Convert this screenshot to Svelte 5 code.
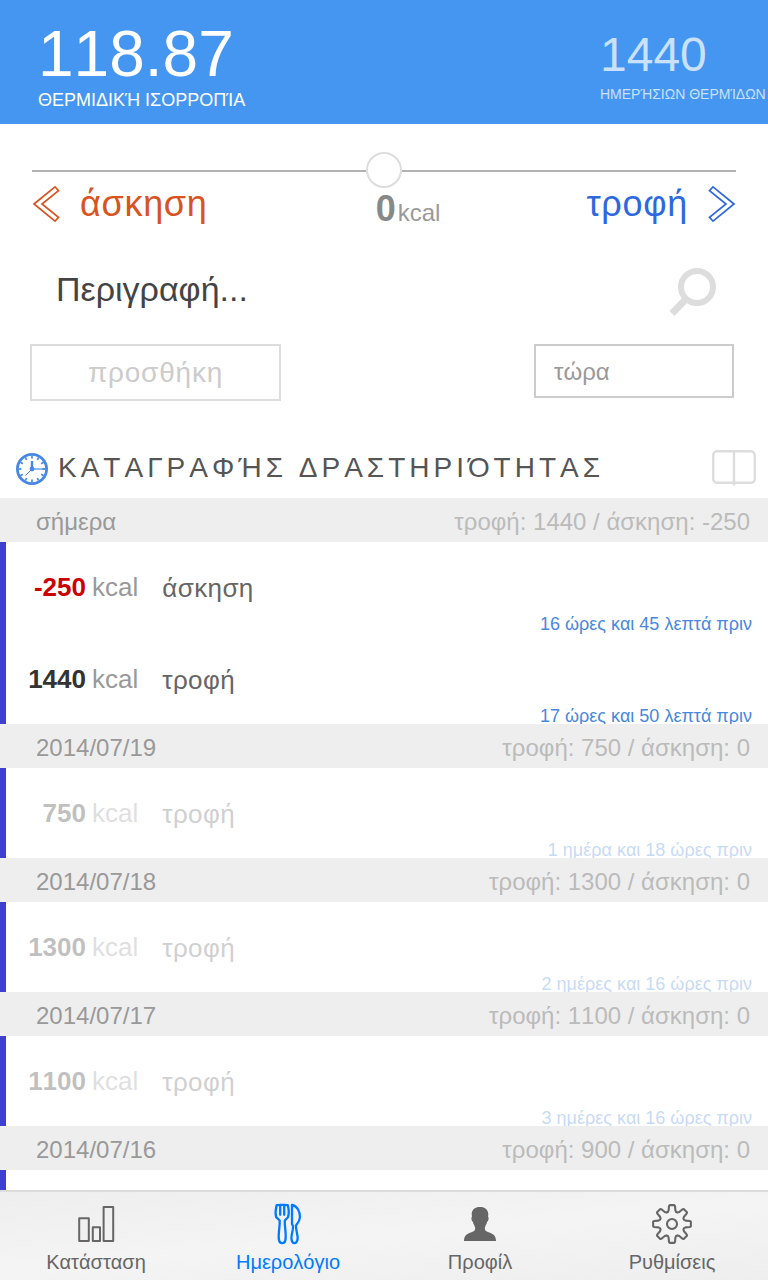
<script>
  const days = [
    { label: 'σήμερα', food: 1440, exercise: -250, faded: false, entries: [
      { amount: -250, name: 'άσκηση', ago: '16 ώρες και 45 λεπτά πριν' },
      { amount: 1440, name: 'τροφή', ago: '17 ώρες και 50 λεπτά πριν' }
    ] },
    { label: '2014/07/19', food: 750, exercise: 0, faded: true, entries: [
      { amount: 750, name: 'τροφή', ago: '1 ημέρα και 18 ώρες πριν' }
    ] },
    { label: '2014/07/18', food: 1300, exercise: 0, faded: true, entries: [
      { amount: 1300, name: 'τροφή', ago: '2 ημέρες και 16 ώρες πριν' }
    ] },
    { label: '2014/07/17', food: 1100, exercise: 0, faded: true, entries: [
      { amount: 1100, name: 'τροφή', ago: '3 ημέρες και 16 ώρες πριν' }
    ] },
    { label: '2014/07/16', food: 900, exercise: 0, faded: true, entries: [] }
  ];
  const ticks = Array.from({ length: 12 }, (_, i) => i * 30);

  // Outline of an eight-toothed cog around the origin.
  function cog() {
    const pts = [];
    for (let i = 0; i < 8; i++) {
      for (const [r, off] of [[14, -14], [18.2, -9.5], [19, -7], [19, 7], [18.2, 9.5], [14, 14], [12.7, 19], [12.7, 26]]) {
        const a = ((i * 45 + off - 90) * Math.PI) / 180;
        pts.push(`${(r * Math.cos(a)).toFixed(2)},${(r * Math.sin(a)).toFixed(2)}`);
      }
    }
    return pts.join(' ');
  }
</script>

<div class="app">
  <header>
    <div class="balance"><div class="big">118.87</div><div class="cap">ΘΕΡΜΙΔΙΚΉ ΙΣΟΡΡΟΠΊΑ</div></div>
    <div class="daily"><div class="big">1440</div><div class="cap">ΗΜΕΡΉΣΙΩΝ ΘΕΡΜΊΔΩΝ</div></div>
  </header>

  <section class="entry">
    <div class="slider"><span class="line"></span><span class="knob"></span><span class="line"></span></div>
    <div class="modes">
      <div class="mode exercise">
        <svg width="28" height="38" viewBox="0 0 28 38"><path d="M2 19 23 1.8 26.5 5.7 10 19 26.5 32.3 23 36.2Z" /></svg>
        <span>άσκηση</span>
      </div>
      <div class="value"><b>0</b><span>kcal</span></div>
      <div class="mode food">
        <span>τροφή</span>
        <svg width="28" height="38" viewBox="0 0 28 38"><path d="M26 19 5 1.8 1.5 5.7 18 19 1.5 32.3 5 36.2Z" /></svg>
      </div>
    </div>
    <div class="describe">
      <span>Περιγραφή...</span>
      <svg width="48" height="50" viewBox="0 0 48 50" fill="none" stroke="#ddd"><circle cx="28" cy="20" r="16" stroke-width="6" /><path d="M18 31 3 46.5" stroke-width="7" /></svg>
    </div>
    <div class="controls"><div class="add">προσθήκη</div><div class="when">τώρα</div></div>
  </section>

  <div class="title">
    <svg class="clock" width="32" height="32" viewBox="-16 -16 32 32" fill="none" stroke="#4788e6">
      <circle r="14.6" stroke-width="2.8" />
      {#each ticks as t}<path d="M0-13.4V-10.6" stroke-width="1.7" transform="rotate({t})" />{/each}
      <path d="M0 0V-8" stroke-width="2.4" /><path d="M0 0H13" stroke-width="1.2" /><path d="M0 0-6.5 6.5" stroke-width="1" />
      <circle r="2.4" fill="#4788e6" stroke="none" />
    </svg>
    <h2>ΚΑΤΑΓΡΑΦΉΣ ΔΡΑΣΤΗΡΙΌΤΗΤΑΣ</h2>
    <svg class="book" width="44" height="36" viewBox="0 0 44 36" fill="none" stroke="#ddd" stroke-width="2.4"><rect x="1.2" y="1.2" width="41.6" height="31.6" rx="4" /><path d="M22 1V35.5" /></svg>
  </div>

  <main>
    {#each days as day}
      <div class="day"><span>{day.label}</span><span class="sum">τροφή: {day.food} / άσκηση: {day.exercise}</span></div>
      <div class="entries" class:faded={day.faded} class:rest={!day.entries.length}>
        {#each day.entries as e}
          <div class="row">
            <div class="what"><b class:neg={e.amount < 0}>{e.amount}</b><span class="unit">kcal</span><span class="name">{e.name}</span></div>
            <div class="ago">{e.ago}</div>
          </div>
        {/each}
      </div>
    {/each}
  </main>

  <nav>
    <div class="tab">
      <svg width="44" height="44" viewBox="0 0 44 44" fill="none" stroke="#666" stroke-width="2" stroke-linejoin="round"><rect x="5.2" y="16.2" width="9.6" height="22.8" /><rect x="18.8" y="25.2" width="7.2" height="13.8" /><rect x="29.6" y="5" width="9.6" height="34" /></svg>
      <span>Κατάσταση</span>
    </div>
    <div class="tab active">
      <svg width="44" height="44" viewBox="0 0 44 44" fill="none" stroke="#007aff" stroke-width="2.3" stroke-linejoin="round" stroke-linecap="round">
        <path d="M10.6 3.2Q16 2.4 21.8 3.2C23 8 23 12 22 15.2L18.8 18.5C18.5 24 20.2 31 19.6 37Q19 41.2 16.2 41.2T12.8 37C12.2 31 14 24 13.7 18.5L10.2 15.2C9.4 12 9.6 7 10.6 3.2Z" />
        <path d="M14.2 3V12.8M18.2 3V12.8" />
        <path d="M26 3C31.5 4 34 10 34 15C33.8 19 32 21 30 23.5C29.5 27 31.8 32 31.7 36.5Q31 41 28.5 41.2T25.4 36.5C25.4 31 27.5 28 27 24L26 22Z" />
      </svg>
      <span>Ημερολόγιο</span>
    </div>
    <div class="tab">
      <svg width="44" height="44" viewBox="0 0 44 44" fill="#666"><path d="M22 5C27 5 30.3 7.5 30.3 12.5L30 14.5C31.2 16 30.6 18.8 29.1 20C28.5 22.5 27 24.2 26.8 26C26.6 28.5 28 29.5 30.5 30.2C35 31.5 38 33.5 38 39H6C6 33.5 9 31.5 13.5 30.2C16 29.5 17.4 28.5 17.2 26C17 24.2 15.5 22.5 14.9 20C13.4 18.8 12.8 16 14 14.5L13.7 12C14 7.2 17 5 22 5Z" /></svg>
      <span>Προφίλ</span>
    </div>
    <div class="tab">
      <svg width="44" height="44" viewBox="-22 -22 44 44" fill="none" stroke="#666" stroke-width="2.1" stroke-linejoin="round"><polygon points={cog()} /><circle r="5" /></svg>
      <span>Ρυθμίσεις</span>
    </div>
  </nav>
</div>

<style>
  :global(body) { margin: 0; background: #fff; overflow: hidden; }
  .app { width: 768px; height: 1280px; display: flex; flex-direction: column; overflow: hidden; font-family: 'Liberation Sans', Arial, sans-serif; font-kerning: none; white-space: nowrap; box-sizing: border-box; }
  .app * { box-sizing: border-box; }
  svg { display: block; flex: none; }
  header { height: 124px; flex: none; background: #4596f1; color: #fff; display: flex; justify-content: space-between; padding-left: 38px; }
  .balance { padding-top: 17px; }
  .balance .big { font-size: 64px; line-height: 74px; }
  .balance .cap { font-size: 18px; line-height: 18px; }
  .daily { width: 168px; padding-top: 27px; color: #c9e1fb; }
  .daily .big { font-size: 48px; line-height: 56px; }
  .daily .cap { font-size: 14px; line-height: 22px; }
  .entry { height: 312px; flex: none; padding: 28px 32px 0; }
  .slider { display: flex; align-items: center; height: 36px; }
  .line { flex: 1; height: 2px; background: #b2b2b2; margin-top: 2px; }
  .knob { width: 36px; height: 36px; border: 2px solid #ddd; border-radius: 50%; }
  .modes { display: grid; grid-template-columns: 1fr auto 1fr; height: 48px; }
  .mode { display: flex; font-size: 36px; line-height: 31px; letter-spacing: 0.7px; }
  .mode svg { margin-top: -3px; fill: none; stroke: currentColor; stroke-width: 1.7; }
  .exercise { color: #d9531e; gap: 20px; }
  .food { color: #2e68de; justify-content: flex-end; gap: 20px; }
  .value { display: flex; align-items: baseline; line-height: 42px; color: #999; font-size: 24px; gap: 2px; margin-left: 48px; }
  .value b { color: #888; font-size: 36px; }
  .describe { display: flex; justify-content: space-between; height: 112px; padding: 32px 19px 0 24px; margin-top: -1px; color: #444; font-size: 34px; line-height: 44px; }
  .controls { display: flex; justify-content: space-between; align-items: flex-start; margin: -3px -2px 0; }
  .add { width: 251px; height: 57px; border: 2px solid #ddd; color: #ccc; text-align: center; font-size: 28px; line-height: 53px; letter-spacing: 0.8px; }
  .when { width: 200px; height: 54px; border: 2px solid #ccc; color: #999; font-size: 24px; line-height: 52px; padding-left: 18px; margin-right: 4px; }
  .title { height: 62px; flex: none; display: flex; align-items: flex-start; padding: 14px 12px 0 16px; }
  .clock { margin-top: 3px; }
  h2 { flex: 1; margin: 1px 0 0 10px; font-size: 28px; font-weight: 400; line-height: 34px; letter-spacing: 4px; color: #555; }
  main { flex: 1; min-height: 0; overflow: hidden; }
  .day { position: relative; height: 44px; background: #eee; color: #999; font-size: 24px; line-height: 48px; padding: 0 18px 0 36px; display: flex; justify-content: space-between; }
  .sum { color: #bbb; }
  .entries { border-left: 6px solid #4040cf; display: flex; flex-direction: column; gap: 2px; }
  .rest { height: 20px; }
  .row { height: 90px; padding: 29px 16px 0 12px; }
  .what { display: flex; font-size: 26px; line-height: 32px; color: #999; }
  .what b { width: 68px; text-align: right; color: #333; }
  .what b.neg { color: #c00; }
  .unit { margin-left: 6px; }
  .name { margin-left: 24px; color: #666; line-height: 34px; letter-spacing: 0.4px; }
  .ago { text-align: right; color: #4788e0; font-size: 18px; line-height: 20px; margin-top: 9px; }
  .faded .row { opacity: 0.3; }
  nav { height: 90px; flex: none; border-top: 2px solid #ddd; background: linear-gradient(175deg, #eee, #f4f4f4 50%, #eee); display: grid; grid-template-columns: repeat(4, 1fr); }
  .tab { display: flex; flex-direction: column; align-items: center; padding-top: 10px; color: #666; font-size: 20px; }
  .tab span { line-height: 24px; margin-top: 4px; }
  .active { color: #007aff; }
</style>
